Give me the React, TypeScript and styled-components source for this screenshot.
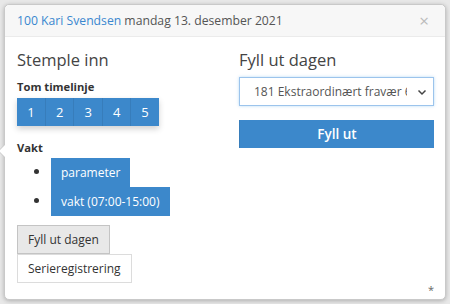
import React, { FC } from 'react';
import styled, { createGlobalStyle } from 'styled-components';

const GlobalStyle = createGlobalStyle`
	html, body {
		margin: 0;
		padding: 0;
		background: #e7e7e7;
	}
	body {
		font-family: 'Open Sans', 'Liberation Sans', sans-serif;
		color: #333;
	}
`;

const Backdrop = styled.div`
	width: 450px;
	height: 304px;
	box-sizing: border-box;
	padding: 4px;
	background: #e8e8e8;
	overflow: hidden;
`;

const Modal = styled.div`
	position: relative;
	height: 296px;
	box-sizing: border-box;
	background: #fff;
	border: 1px solid #c9c9c9;
	border-radius: 5px;
	box-shadow: 0 1px 4px rgba(0, 0, 0, 0.25);

	&::before {
		content: '';
		position: absolute;
		left: -7px;
		top: 139px;
		border-top: 7px solid transparent;
		border-bottom: 7px solid transparent;
		border-right: 7px solid #c9c9c9;
	}
	&::after {
		content: '';
		position: absolute;
		left: -6px;
		top: 139px;
		border-top: 7px solid transparent;
		border-bottom: 7px solid transparent;
		border-right: 7px solid #fff;
	}
`;

const Header = styled.div`
	display: flex;
	align-items: center;
	justify-content: space-between;
	height: 31px;
	padding: 0 12px;
	background: #f7f7f7;
	border-bottom: 1px solid #ebebeb;
	border-radius: 5px 5px 0 0;
	font-size: 12.2px;
	color: #555;
`;

const Who = styled.span`
	color: #3a87cf;
`;

const Close = styled.span`
	font-size: 17px;
	color: #bbb;
	line-height: 1;
	margin-right: 4px;
`;

const Body = styled.div`
	display: grid;
	grid-template-columns: 222px 195px;
	padding: 11px 12px 0 12px;
`;

const Column = styled.div`
	display: flex;
	flex-direction: column;
	align-items: flex-start;
`;

const Heading = styled.h3`
	margin: 0 0 7px 0;
	font-size: 16.5px;
	font-weight: 400;
	line-height: 24px;
	color: #444;
`;

const Label = styled.div`
	font-size: 11.2px;
	font-weight: 700;
	line-height: 16px;
	color: #333;
	margin-bottom: 3px;
`;

const Group = styled.div`
	display: flex;
	box-shadow: 0 3px 6px rgba(0, 0, 0, 0.18);
	margin-bottom: 14px;
`;

const BlueButton = styled.button<{ $wide?: boolean }>`
	height: 28px;
	padding: 0 ${p => (p.$wide ? '0' : '10px')};
	width: ${p => (p.$wide ? '100%' : 'auto')};
	min-width: 28px;
	box-sizing: border-box;
	border: none;
	border-left: 1px solid rgba(0, 0, 0, 0.08);
	background: #3c88cb;
	color: #fff;
	font-family: inherit;
	font-size: ${p => (p.$wide ? '13.5px' : '13px')};
	font-weight: ${p => (p.$wide ? 600 : 400)};

	&:first-child {
		border-left: none;
	}
`;

const ShiftList = styled.ul`
	margin: -2px 0 10px 0;
	padding: 0 0 0 34px;
	font-size: 12px;
	li {
		line-height: 29px;
		height: 29px;
	}
	li::marker {
		font-size: 14px;
	}
`;

const ShiftButton = styled(BlueButton)`
	height: 29px;
	padding: 0 10px;
	font-size: 12px;
	vertical-align: top;
`;

const PlainButton = styled.button<{ $pressed?: boolean }>`
	height: 29px;
	padding: 0 10px;
	box-sizing: border-box;
	border: 1px solid ${p => (p.$pressed ? '#c4c4c4' : '#dcdcdc')};
	background: ${p => (p.$pressed ? '#e8e8e8' : '#fff')};
	color: #333;
	font-family: inherit;
	font-size: 12px;
`;

const SelectBox = styled.div`
	display: flex;
	align-items: center;
	justify-content: space-between;
	width: 100%;
	height: 29px;
	box-sizing: border-box;
	padding: 0 6px 0 14px;
	margin: -2px 0 14px 0;
	border: 1px solid #9cc4ec;
	box-shadow: 0 0 3px rgba(102, 175, 233, 0.45);
	font-size: 12px;
	color: #555;
	white-space: nowrap;
	overflow: hidden;
`;

const SelectText = styled.span`
	overflow: hidden;
	width: 153px;
	text-overflow: clip;
`;

const Star = styled.span`
	position: absolute;
	right: 11px;
	bottom: 2px;
	font-size: 11px;
	color: #666;
`;

const Chevron: FC = () => (
	<svg width="10" height="10" viewBox="0 0 10 10">
		<path d="M1.5 3.5 L5 7 L8.5 3.5" fill="none" stroke="#444" strokeWidth="1.5" />
	</svg>
);

const App: FC = () => {
	return (
		<>
			<GlobalStyle />
			<Backdrop>
				<Modal>
					<Header>
						<span>
							<Who>100 Kari Svendsen</Who> mandag 13. desember 2021
						</span>
						<Close>×</Close>
					</Header>
					<Body>
						<Column>
							<Heading>Stemple inn</Heading>
							<Label>Tom timelinje</Label>
							<Group>
								{[1, 2, 3, 4, 5].map(n => (
									<BlueButton key={n}>{n}</BlueButton>
								))}
							</Group>
							<Label>Vakt</Label>
							<ShiftList>
								<li>
									<ShiftButton>parameter</ShiftButton>
								</li>
								<li>
									<ShiftButton>vakt (07:00-15:00)</ShiftButton>
								</li>
							</ShiftList>
							<PlainButton $pressed>Fyll ut dagen</PlainButton>
							<PlainButton>Serieregistrering</PlainButton>
						</Column>
						<Column>
							<Heading>Fyll ut dagen</Heading>
							<SelectBox>
								<SelectText>181 Ekstraordinært fravær 6</SelectText>
								<Chevron />
							</SelectBox>
							<BlueButton $wide>Fyll ut</BlueButton>
						</Column>
					</Body>
					<Star>*</Star>
				</Modal>
			</Backdrop>
		</>
	);
};

export default App;
